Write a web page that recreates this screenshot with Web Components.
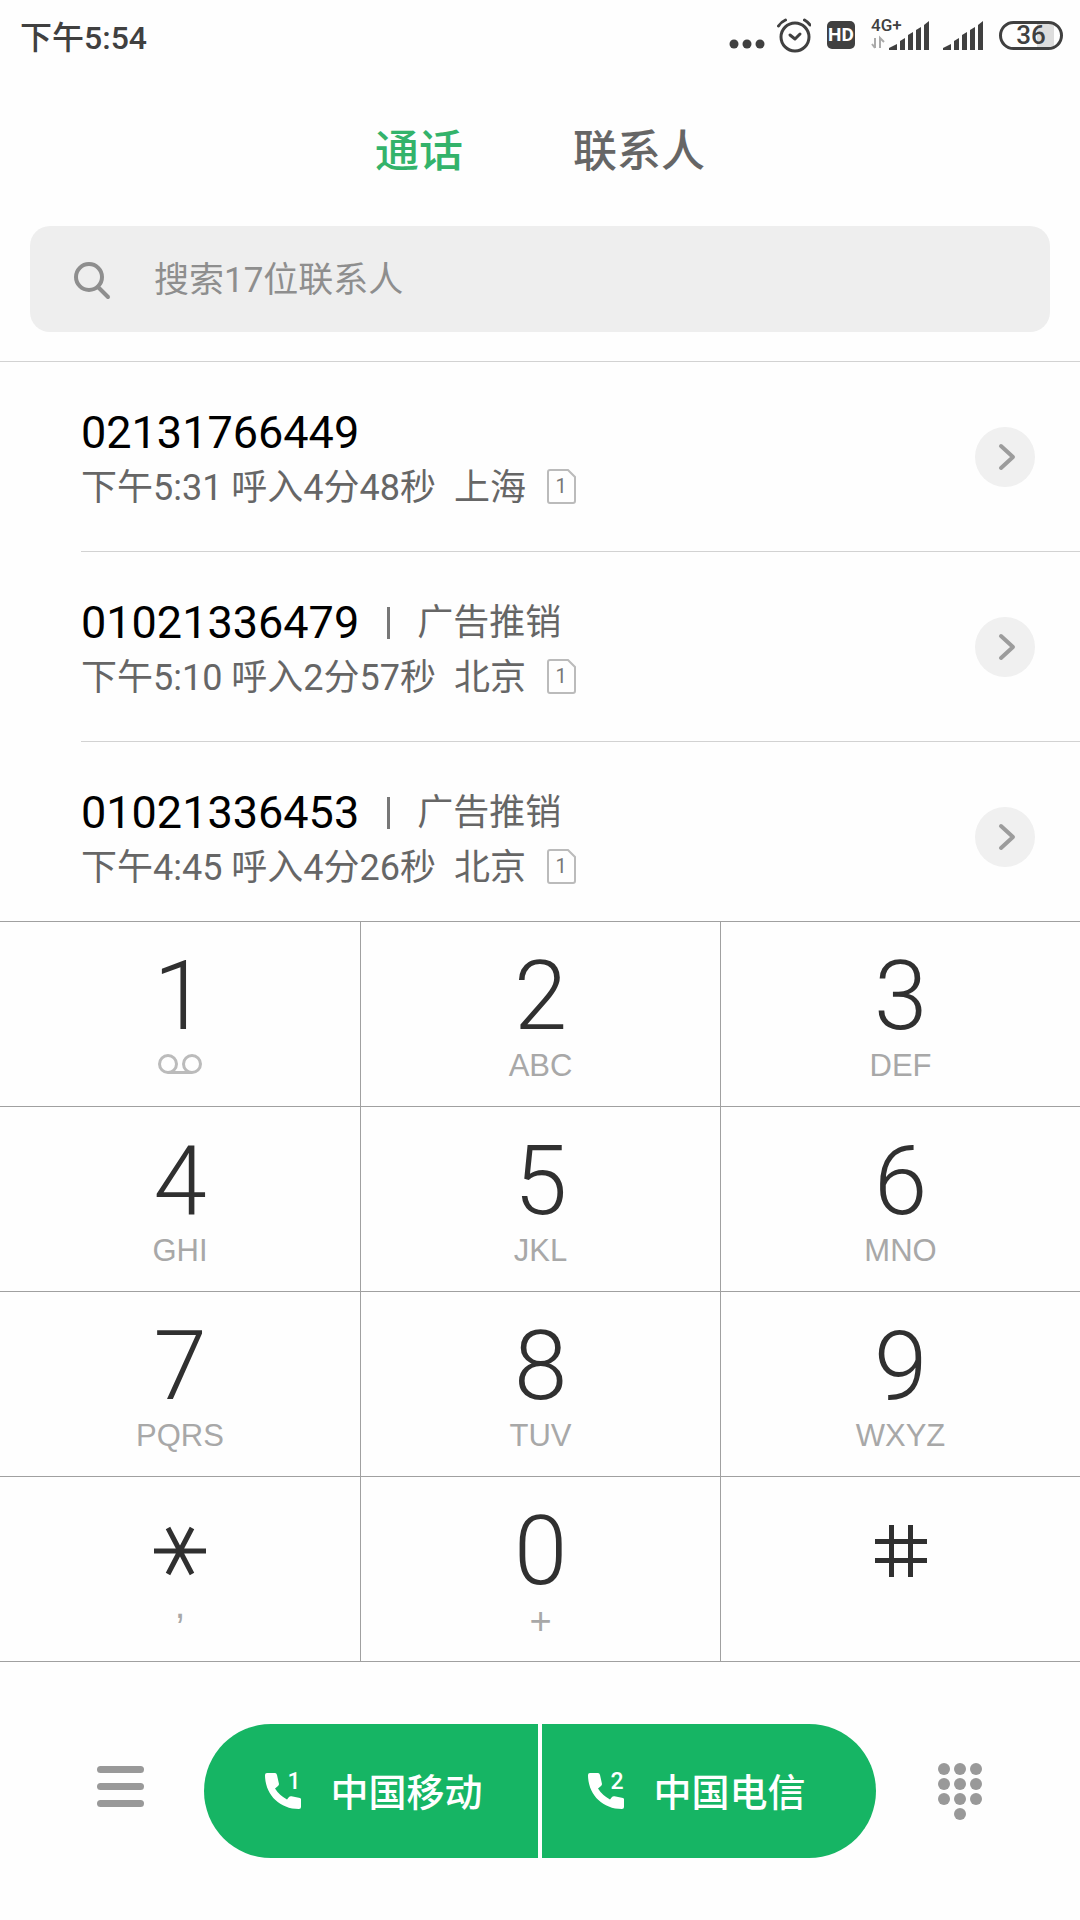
<!DOCTYPE html>
<html lang="zh-CN">
<head>
<meta charset="utf-8">
<meta name="viewport" content="width=device-width, initial-scale=1">
<title>通话</title>
<style>
  body {
    margin: 0;
    background: #fefefe;
    font-family: Roboto, "Noto Sans CJK SC", sans-serif;
    color: #666;
  }
</style>
</head>
<body>
<dialer-app></dialer-app>

<script>
/**
 * Small base class: every element renders its template into an open shadow root
 */
class BaseElement extends HTMLElement {
  constructor() {
    super();
    this.attachShadow({ mode: 'open' });
  }

  connectedCallback() {
    this.shadowRoot.innerHTML = this.template();
  }

  template() {
    return '';
  }
}

/**
 * System status bar
 */
class StatusBar extends BaseElement {
  template() {
    const bars = `
      <path d="M0 29V27L8 23V29Z"/>
      <path d="M11 29V20L16 17V29Z"/>
      <path d="M19 29V14L24 11V29Z"/>
      <path d="M27 29V9L32 6V29Z"/>
      <path d="M35 29V4L40 0V29Z"/>`;

    return `
      <style>
        :host {
          display: flex;
          align-items: center;
          justify-content: space-between;
          height: 70px;
          padding: 0 17px 0 20px;
          color: #404040;
        }

        time {
          font-size: 32px;
          font-weight: 500;
        }

        .icons {
          display: flex;
          align-items: center;
        }

        svg {
          display: block;
          fill: #404040;
        }

        .hd {
          width: 28px;
          margin: 0 16px 0 16px;
          border-radius: 5px;
          background: #404040;
          color: #fff;
          font-size: 19px;
          font-weight: 700;
          line-height: 28px;
          text-align: center;
        }

        .second {
          margin: 0 16px 0 14px;
        }

        .battery {
          box-sizing: border-box;
          width: 64px;
          border: 3px solid #404040;
          border-radius: 15px;
          background: linear-gradient(90deg, #fefefe 60%, #ddd 60%, #ddd 90%, #fefefe 90%);
          font-size: 26px;
          font-weight: 500;
          line-height: 23px;
          text-align: center;
        }
      </style>

      <time>下午5:54</time>
      <div class="icons">
        <svg width="82" height="36" viewBox="0 0 82 36">
          <circle cx="5" cy="27" r="4.5"/>
          <circle cx="18" cy="27" r="4.5"/>
          <circle cx="31" cy="27" r="4.5"/>
          <g fill="none" stroke="#404040" stroke-width="3" stroke-linecap="round">
            <circle cx="66" cy="20" r="14"/>
            <path d="M61 18L66 22L71 17" stroke-linejoin="round"/>
            <path d="M49.500 9Q52 5 56.500 3M75.500 3Q79 5 81 8"/>
          </g>
        </svg>
        <span class="hd">HD</span>
        <svg width="58" height="40" viewBox="0 -5 58 40">
          <text x="0" y="11" font-size="17" font-weight="500">4G+</text>
          <path d="M4 18V28M4 28L1 24M9 28V18L13 22" fill="none" stroke="#aaa" stroke-width="2"/>
          <g transform="translate(18 1)">${bars}</g>
        </svg>
        <svg class="second" width="40" height="30" viewBox="0 0 40 30">
          <g transform="translate(0 1)">${bars}</g>
        </svg>
        <span class="battery">36</span>
      </div>
    `;
  }
}

/**
 * Tab button, the label is slotted
 */
class DialerTab extends BaseElement {
  template() {
    return `
      <style>
        :host {
          display: block;
        }

        button {
          padding: 0;
          border: 0;
          background: none;
          color: #666;
          font: inherit;
          font-size: 44px;
          font-weight: 500;
          line-height: 64px;
        }

        :host([selected]) button {
          color: #33b36b;
        }
      </style>
      <button type="button" role="tab" aria-selected="${this.hasAttribute('selected')}"><slot></slot></button>
    `;
  }
}

/**
 * Contact search field
 */
class ContactSearch extends BaseElement {
  template() {
    return `
      <style>
        :host {
          display: block;
          padding: 0 30px 29px;
          border-bottom: 1px solid #d2d2d2;
        }

        label {
          display: flex;
          align-items: center;
          box-sizing: border-box;
          gap: 42px;
          height: 106px;
          padding: 4px 44px 0;
          border-radius: 20px;
          background: #eee;
        }

        svg {
          flex: none;
          fill: none;
          stroke: #8e8e8e;
          stroke-width: 4;
          stroke-linecap: round;
        }

        input {
          flex: 1;
          min-width: 0;
          padding: 0;
          border: 0;
          outline: 0;
          background: none;
          color: #333;
          font: inherit;
          font-size: 35px;
          line-height: 52px;
        }

        input::placeholder {
          color: #8e8e8e;
          opacity: 1;
        }
      </style>
      <label>
        <svg width="38" height="38" viewBox="0 0 38 38">
          <circle cx="15" cy="15" r="13"/>
          <path d="M25 26L34 35"/>
        </svg>
        <input type="search" placeholder="${this.getAttribute('placeholder')}" aria-label="${this.getAttribute('placeholder')}">
      </label>
    `;
  }
}

/**
 * One call log entry: number, optional tag, details and the SIM used
 */
class CallItem extends BaseElement {
  template() {
    const tag = this.getAttribute('tag');

    return `
      <style>
        :host {
          display: flex;
          align-items: center;
          gap: 20px;
          margin-left: 81px;
          padding-right: 45px;
          border-bottom: 1px solid #d2d2d2;
        }

        :host(:last-child) {
          border-bottom: 0;
        }

        .info {
          flex: 1;
          padding: 44px 0 35px;
        }

        .title,
        .detail {
          display: flex;
          align-items: center;
          font-size: 36px;
          white-space: pre;
        }

        .title {
          line-height: 54px;
        }

        .detail {
          gap: 21px;
          line-height: 56px;
        }

        .number {
          color: #000;
          font-size: 45px;
        }

        .tag {
          display: flex;
          align-items: center;
          gap: 27px;
          margin-left: 28px;
        }

        .tag::before {
          content: "";
          width: 3px;
          height: 32px;
          background: #777;
        }

        button {
          display: grid;
          place-items: center;
          width: 60px;
          height: 60px;
          padding: 0;
          border: 0;
          border-radius: 50%;
          background: #f0f0f0;
        }

        .more {
          fill: none;
          stroke: #9c9c9c;
          stroke-width: 4;
          stroke-linecap: round;
          stroke-linejoin: round;
        }
      </style>
      <div class="info">
        <div class="title">
          <span class="number">${this.getAttribute('number')}</span>
          ${tag ? `<span class="tag">${tag}</span>` : ''}
        </div>
        <div class="detail"><span><slot></slot></span><svg width="30" height="38" viewBox="0 0 30 38">
            <path d="M3 1H21L28 8V32Q28 34 26 34H3Q1 34 1 32V3Q1 1 3 1Z" fill="none" stroke="#bbb" stroke-width="2"/>
            <text x="14" y="24" font-size="20" text-anchor="middle" fill="#777">1</text>
          </svg></div>
      </div>
      <button type="button" aria-label="详情">
        <svg class="more" width="28" height="28" viewBox="0 0 28 28"><path d="M10 3L22 14L10 25"/></svg>
      </button>
    `;
  }
}

/**
 * Dial pad key; symbols and sub icons are slotted
 */
class DialKey extends BaseElement {
  template() {
    return `
      <style>
        :host {
          display: block;
          border-bottom: 1px solid #a0a0a0;
          border-left: 1px solid #a0a0a0;
        }

        :host(:nth-child(3n + 1)) {
          border-left: 0;
        }

        button {
          display: flex;
          flex-direction: column;
          align-items: center;
          gap: 4px;
          width: 100%;
          padding: 26px 0 22px;
          border: 0;
          background: none;
          color: #303030;
          font: inherit;
        }

        .digit {
          display: grid;
          place-items: center;
          height: 96px;
          font-size: 96px;
          font-weight: 300;
          line-height: 96px;
        }

        .letters {
          display: grid;
          place-items: center;
          height: 36px;
          color: #a8a8a8;
          font-family: "Liberation Sans", sans-serif;
          font-size: 31px;
          line-height: 36px;
        }

        :host([mark]) .letters {
          font-size: 38px;
        }

        :host([mark="raised"]) .letters {
          place-items: start center;
          line-height: 4px;
        }
      </style>
      <button type="button">
        <span class="digit"><slot></slot></span>
        <span class="letters"><slot name="sub"></slot></span>
      </button>
    `;
  }
}

/**
 * Call button for one SIM card
 */
class SimCall extends BaseElement {
  template() {
    return `
      <style>
        :host {
          display: block;
          flex: 1;
        }

        button {
          display: flex;
          align-items: center;
          justify-content: center;
          gap: 27px;
          width: 100%;
          height: 134px;
          padding: 0 0 0 6px;
          border: 0;
          border-radius: 67px 0 0 67px;
          background: #16b564;
          color: #fff;
          font: inherit;
          font-size: 38px;
          font-weight: 500;
        }

        :host(:last-child) button {
          padding: 0 24px 0 0;
          border-radius: 0 67px 67px 0;
        }

        svg {
          fill: #fff;
        }

        .label {
          padding-bottom: 4px;
        }
      </style>
      <button type="button">
        <svg width="38" height="50" viewBox="0 -6 38 50">
          <path d="M2 1H10Q11.500 1 12 3L14 12Q14 13 13 14L10 16.500Q14 23 22 27.500L24 25Q25 24 26.500 24.300L35 26Q36 26.300 36 27.500V35Q36 37 34 37C14 37 0 22 0 3Q0 1 2 1Z"/>
          <text x="29" y="17" font-size="23" text-anchor="middle">${this.getAttribute('sim')}</text>
        </svg>
        <span class="label"><slot></slot></span>
      </button>
    `;
  }
}

/**
 * Bottom bar: menu, slotted call buttons, keypad toggle
 */
class CallBar extends BaseElement {
  template() {
    const dots = [];
    for (let i = 0; i < 9; i++) {
      dots.push(`<circle cx="${6 + (i % 3) * 16}" cy="${6 + Math.floor(i / 3) * 15}" r="6"/>`);
    }
    dots.push('<circle cx="22" cy="51" r="6"/>');

    return `
      <style>
        :host {
          display: flex;
          align-items: center;
          gap: 24px;
          padding: 62px 60px;
        }

        button {
          display: grid;
          place-items: center;
          width: 120px;
          height: 134px;
          padding: 0;
          border: 0;
          background: none;
        }

        svg {
          fill: #999;
        }

        .calls {
          display: flex;
          flex: 1;
          gap: 4px;
        }
      </style>
      <button type="button" aria-label="菜单">
        <svg width="47" height="50" viewBox="0 0 47 50">
          <rect width="47" height="7" rx="3.5"/>
          <rect y="17" width="47" height="7" rx="3.5"/>
          <rect y="34" width="47" height="7" rx="3.5"/>
        </svg>
      </button>
      <div class="calls"><slot></slot></div>
      <button type="button" aria-label="拨号盘">
        <svg width="44" height="57" viewBox="0 0 44 57">${dots.join('')}</svg>
      </button>
    `;
  }
}

/**
 * Whole dialer screen
 */
class DialerApp extends BaseElement {
  template() {
    return `
      <style>
        :host {
          display: flex;
          flex-direction: column;
          height: 100vh;
        }

        nav {
          display: flex;
          justify-content: center;
          gap: 110px;
          padding: 50px 0 42px;
        }

        /* the log runs on under the keypad */
        .log {
          flex: 1 1 0;
          min-height: 0;
          overflow: hidden;
        }

        .keypad {
          display: grid;
          grid-template-columns: repeat(3, 1fr);
          border-top: 1px solid #a0a0a0;
        }

        .keypad svg {
          display: block;
          fill: none;
          stroke: #303030;
          stroke-width: 5;
        }

        .keypad .voicemail {
          stroke: #bbb;
          stroke-width: 3;
        }
      </style>

      <status-bar></status-bar>
      <nav role="tablist">
        <dialer-tab selected>通话</dialer-tab>
        <dialer-tab>联系人</dialer-tab>
      </nav>
      <contact-search placeholder="搜索17位联系人"></contact-search>

      <div class="log">
        <call-item number="02131766449">下午5:31 呼入4分48秒  上海</call-item>
        <call-item number="01021336479" tag="广告推销">下午5:10 呼入2分57秒  北京</call-item>
        <call-item number="01021336453" tag="广告推销">下午4:45 呼入4分26秒  北京</call-item>
      </div>

      <div class="keypad">
        <dial-key>1
          <svg slot="sub" class="voicemail" width="46" height="24" viewBox="0 0 46 24">
            <circle cx="11" cy="10" r="8.5"/>
            <circle cx="35" cy="10" r="8.5"/>
            <path d="M11 18.500H35"/>
          </svg>
        </dial-key>
        <dial-key>2<span slot="sub">ABC</span></dial-key>
        <dial-key>3<span slot="sub">DEF</span></dial-key>
        <dial-key>4<span slot="sub">GHI</span></dial-key>
        <dial-key>5<span slot="sub">JKL</span></dial-key>
        <dial-key>6<span slot="sub">MNO</span></dial-key>
        <dial-key>7<span slot="sub">PQRS</span></dial-key>
        <dial-key>8<span slot="sub">TUV</span></dial-key>
        <dial-key>9<span slot="sub">WXYZ</span></dial-key>
        <dial-key mark="raised">
          <svg role="img" aria-label="*" width="52" height="52" viewBox="0 0 52 52">
            <path d="M0 26H52M14 3L38 49M38 3L14 49"/>
          </svg>
          <span slot="sub">,</span>
        </dial-key>
        <dial-key mark>0<span slot="sub">+</span></dial-key>
        <dial-key>
          <svg role="img" aria-label="#" width="52" height="52" viewBox="0 0 52 52">
            <path d="M0 16.500H52M0 35.500H52M16.500 0V52M35.500 0V52"/>
          </svg>
        </dial-key>
      </div>

      <call-bar>
        <sim-call sim="1">中国移动</sim-call>
        <sim-call sim="2">中国电信</sim-call>
      </call-bar>
    `;
  }
}

customElements.define('status-bar', StatusBar);
customElements.define('dialer-tab', DialerTab);
customElements.define('contact-search', ContactSearch);
customElements.define('call-item', CallItem);
customElements.define('dial-key', DialKey);
customElements.define('sim-call', SimCall);
customElements.define('call-bar', CallBar);
customElements.define('dialer-app', DialerApp);
</script>
</body>
</html>
